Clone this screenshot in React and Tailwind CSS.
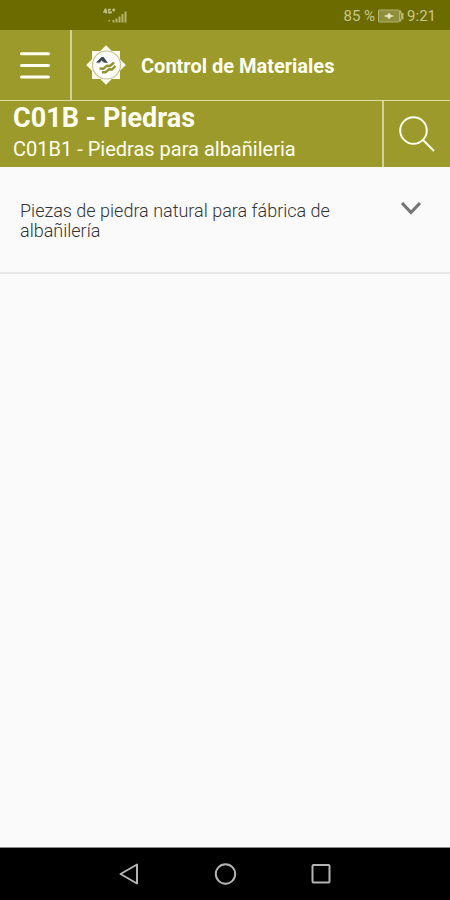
import React from "react";

function StatusBar() {
  return (
    <div className="flex h-[30px] shrink-0 items-center justify-between bg-[#6b6b00] pt-px pr-[14px] pl-[102px] text-[#c9c88c]">
      <svg className="h-5 w-7" viewBox="0 0 28 20" role="img" aria-label="4G+">
        <g fill="none" stroke="#c4c383" strokeWidth="1.400">
          <path d="M3.600 2.500 2 6h3M4.400 3.500v4M9 3.500H6.800v3.200H9V5M10.200 4h3M11.700 2.500v3" />
        </g>
        <g fill="#b5b46a">
          <path d="M6.500 14H8v1.500H6.500zM10.500 14h2v2.500h-2zM13.500 12.500h2v4h-2zM16.500 10.500h2v6h-2zM19.500 8h2v8.500h-2zM22.500 5.500h2v11h-2z" />
        </g>
      </svg>
      <div className="flex items-center gap-[3px] text-[15px] leading-5">
        <span>85 %</span>
        <svg className="h-3.5 w-[26px]" viewBox="0 0 26 14" role="img" aria-label="Cargando">
          <rect x="0.500" y="1" width="21" height="12" rx="1" fill="#8f8e3c" stroke="#b5b46a" />
          <path d="M22 1.500c2 3 2 8 0 11M24.800 4v6.500" fill="none" stroke="#b5b46a" strokeWidth="1.500" />
          <path d="M6.500 7 10 6l1-2 1.200 2 3.300 1-3.300 1-1.200 2-1-2z" fill="#eeeecb" stroke="#eeeecb" strokeWidth=".5" />
        </svg>
        <time>9:21</time>
      </div>
    </div>
  );
}

function Logo() {
  return (
    <svg className="size-10 shrink-0" viewBox="0 0 40 40" aria-hidden="true">
      <path d="M6 6h28v28H6z" fill="#fffef0" />
      <path d="M6 6h28v28H6z" fill="#fffef0" transform="rotate(45 20 20)" />
      <circle cx="20.500" cy="20" r="14" fill="#fff" stroke="#c4c290" strokeWidth="1.200" />
      <path d="M10 17.500 15.500 12h2l4.500 6-4-.5-2.500-2-2 2.500z" fill="#39464f" />
      <path d="m10 17.500 3.500.500 2-2.500 2.500 2" fill="none" stroke="#9aa1a5" strokeWidth="1" />
      <path d="m13.500 23.500 4 .2 3.500-3 3 .3 4-3.500M16 27.200l3.500.1 3.500-3 3 .2 3.500-3.500" fill="none" stroke="#929430" strokeWidth="2.400" />
    </svg>
  );
}

function Header() {
  return (
    <header className="flex h-[71px] shrink-0 border-b border-[#dedca8] bg-[#9c9a2a] text-[#fffff2]">
      <button type="button" aria-label="Menú" className="flex w-[72px] shrink-0 items-center justify-center border-r-2 border-[#d3d199]">
        <svg className="h-[30px] w-8" viewBox="0 0 32 30" fill="none" stroke="#fffff2" strokeWidth="3" strokeLinecap="round">
          <path d="M2.500 3.800h27M2.500 15.500h27M2.500 27h27" />
        </svg>
      </button>
      <div className="flex items-center gap-[15px] pl-[14px]">
        <Logo />
        <h1 className="pt-0.5 text-xl font-bold">Control de Materiales</h1>
      </div>
    </header>
  );
}

function SectionBar() {
  return (
    <div className="flex shrink-0 bg-[#9c9a2a] text-[#fffff2]">
      <div className="min-w-0 flex-1 pb-1 pl-[13px]">
        <h2 className="text-[27px] leading-[34px] font-bold">C01B - Piedras</h2>
        <p className="text-xl leading-7">C01B1 - Piedras para albañileria</p>
      </div>
      <button type="button" aria-label="Buscar" className="flex w-[68px] shrink-0 items-center justify-center border-l-2 border-[#d3d199]">
        <svg className="size-10" viewBox="0 0 40 40" fill="none" stroke="#fffff2" strokeWidth="2">
          <circle cx="16.500" cy="16.500" r="13.300" />
          <path d="M26 26 37 37" />
        </svg>
      </button>
    </div>
  );
}

function MaterialItem() {
  return (
    <button type="button" aria-expanded="false" className="flex w-full items-start justify-between border-b-2 border-[#e6e6e6] pt-[34px] pr-7 pb-[31px] pl-5 text-left">
      <span className="max-w-[330px] text-[18px] leading-5 font-light text-[#333]">Piezas de piedra natural para fábrica de albañilería</span>
      <svg className="h-[15px] w-[22px] shrink-0" viewBox="0 0 22 15" fill="none" stroke="#747474" strokeWidth="3.200">
        <path d="m2 2 9 9.500L20 2" />
      </svg>
    </button>
  );
}

function NavigationBar() {
  return (
    <nav className="flex h-[53px] shrink-0 justify-center border-t border-[#8a8a8a] bg-black text-[#b4b4b4]">
      <button type="button" aria-label="Atrás" className="flex w-24 items-center justify-center">
        <svg className="size-6" viewBox="0 0 24 24" fill="none" stroke="currentColor" strokeWidth="2" strokeLinejoin="round">
          <path d="M20 2.500v19L3.500 12z" />
        </svg>
      </button>
      <button type="button" aria-label="Inicio" className="flex w-24 items-center justify-center">
        <svg className="size-6" viewBox="0 0 24 24" fill="none" stroke="currentColor" strokeWidth="2">
          <circle cx="12.500" cy="12" r="9.700" />
        </svg>
      </button>
      <button type="button" aria-label="Recientes" className="flex w-24 items-center justify-center">
        <svg className="size-6" viewBox="0 0 24 24" fill="none" stroke="currentColor" strokeWidth="2">
          <rect x="3.500" y="3" width="17" height="17.500" rx="1" />
        </svg>
      </button>
    </nav>
  );
}

export default function App() {
  return (
    <div className="flex min-h-screen flex-col bg-[#fafafa] font-['Roboto',sans-serif]">
      <StatusBar />
      <Header />
      <SectionBar />
      <main className="flex-1">
        <MaterialItem />
      </main>
      <NavigationBar />
    </div>
  );
}
